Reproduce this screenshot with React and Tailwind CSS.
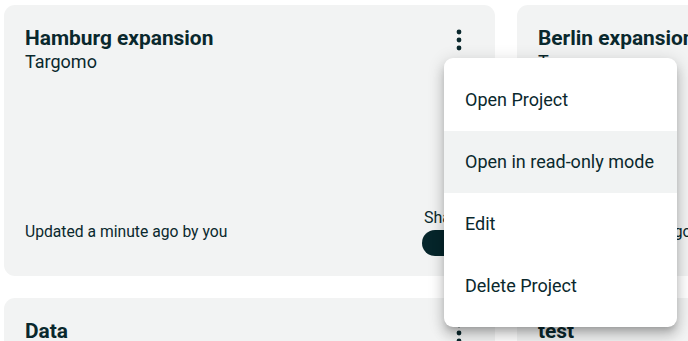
import React from "react";

function Kebab() {
  return (
    <svg width="12" height="26" viewBox="0 0 12 26" className="block">
      <circle cx="6" cy="5" r="2.4" fill="#0a282d" />
      <circle cx="6" cy="13" r="2.4" fill="#0a282d" />
      <circle cx="6" cy="21" r="2.4" fill="#0a282d" />
    </svg>
  );
}

function Card({ title, subtitle }) {
  return (
    <div className="h-[271px] rounded-[11px] bg-[#f2f3f3] px-[21px] pt-[21px] pb-[20px] flex flex-col text-[#0a282d]">
      <div className="flex items-start justify-between">
        <div>
          <div className="text-[20.9px] font-bold leading-[25px]">{title}</div>
          <div className="text-[18px] leading-[22px]">{subtitle}</div>
        </div>
        <div className="mt-[1px] mr-[9px]">
          <Kebab />
        </div>
      </div>
      <div className="mt-auto flex items-center justify-between">
        <div className="text-[15.7px] leading-[20px]">Updated a minute ago by you</div>
        <div className="flex flex-col items-start w-[52px]">
          <div className="text-[16px] leading-[20px] ml-[2px]">Shared</div>
          <div className="mt-[2px] h-[26px] w-[52px] rounded-full bg-[#06262b]" />
        </div>
      </div>
    </div>
  );
}

export default function App() {
  const items = ["Open Project", "Open in read-only mode", "Edit", "Delete Project"];
  return (
    <div
      className="relative w-[688px] h-[341px] overflow-hidden bg-white"
      style={{ fontFamily: "Roboto, 'Liberation Sans', sans-serif" }}
    >
      <div className="grid grid-cols-[491px_491px] gap-[22px] pl-[4px] pt-[5px]">
        <Card title="Hamburg expansion" subtitle="Targomo" />
        <Card title="Berlin expansion" subtitle="Targomo" />
        <Card title="Data" subtitle="Targomo" />
        <Card title="test" subtitle="Targomo" />
      </div>
      <div className="absolute left-[444px] top-[58px] w-[233px] rounded-[9px] bg-white pt-[11px] pb-[10px] shadow-[0_5px_6px_-3px_rgba(0,0,0,0.2),0_9px_12px_1px_rgba(0,0,0,0.14),0_3px_16px_2px_rgba(0,0,0,0.12)] text-[#0a282d]">
        {items.map((it, i) => (
          <div
            key={it}
            className={
              "h-[62px] flex items-center px-[21px] pb-[1px] text-[18px] " +
              (i === 1 ? "bg-[#f1f3f3]" : "")
            }
          >
            {it}
          </div>
        ))}
      </div>
    </div>
  );
}
